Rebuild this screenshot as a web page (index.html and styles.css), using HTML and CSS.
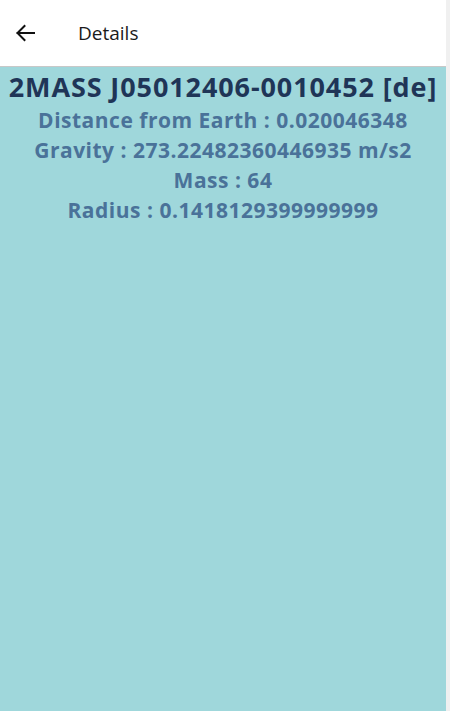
FILE: index.html
```html
<!DOCTYPE html>
<html>
<head>
<meta charset="utf-8">
<link rel="stylesheet" href="styles.css">
</head>
<body>
<div class="app">
  <header class="topbar">
    <button class="back" aria-label="Back">
      <svg width="24" height="24" viewBox="0 0 24 24"><path d="M21 12H4.5M11.5 5l-7 7 7 7" fill="none" stroke="#111" stroke-width="2" stroke-linecap="square"/></svg>
    </button>
    <span class="title">Details</span>
  </header>
  <main class="panel">
    <h1 class="name">2MASS J05012406-0010452 [de]</h1>
    <p class="info">Distance from Earth : 0.020046348</p>
    <p class="info">Gravity : 273.22482360446935 m/s2</p>
    <p class="info">Mass : 64</p>
    <p class="info">Radius : 0.1418129399999999</p>
  </main>
</div>
</body>
</html>
```
FILE: styles.css
```css
html, body {
  margin: 0;
  padding: 0;
  height: 100%;
}
body {
  background: #f0f0f0;
  font-family: "Open Sans", "Noto Sans", sans-serif;
}
.app {
  width: 446px;
  height: 100%;
  display: flex;
  flex-direction: column;
}
.topbar {
  height: 66px;
  background: #fff;
  border-bottom: 1px solid #c8c8c8;
  display: flex;
  align-items: center;
  box-sizing: content-box;
}
.back {
  width: 24px;
  height: 24px;
  margin-left: 13px;
  padding: 0;
  border: 0;
  background: none;
  display: flex;
}
.title {
  margin-left: 41px;
  font-size: 19px;
  font-weight: 500;
  color: #1a1a1a;
}
.panel {
  flex: 1;
  background: #9fd7db;
  text-align: center;
  padding-top: 2px;
}
.name {
  margin: 0;
  font-size: 27px;
  letter-spacing: 0.9px;
  line-height: 36px;
  font-weight: 700;
  color: #1f3557;
}
.info {
  margin: 0;
  font-size: 21px;
  letter-spacing: 0.5px;
  line-height: 30px;
  font-weight: 700;
  color: #4a7299;
}
```
